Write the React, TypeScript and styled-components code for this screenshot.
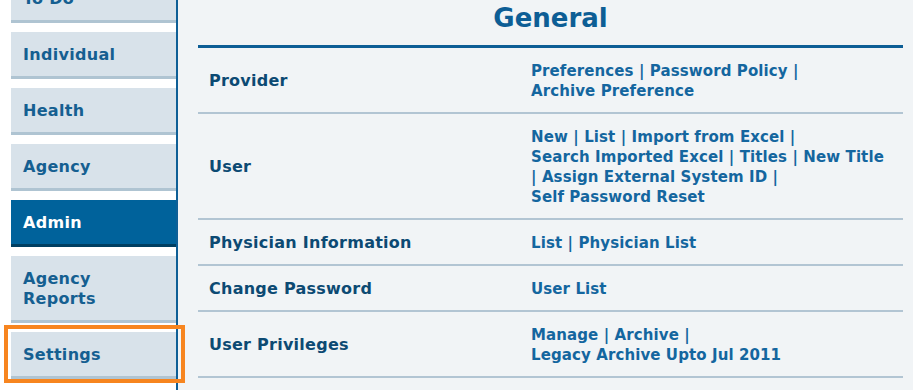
import React from "react";
import styled, { createGlobalStyle } from "styled-components";

const GlobalStyle = createGlobalStyle`
  html, body {
    margin: 0;
    padding: 0;
    background: #ffffff;
    font-family: "DejaVu Sans", Verdana, sans-serif;
    overflow: hidden;
  }
  * { box-sizing: border-box; }
`;

const Page = styled.div`
  display: flex;
  margin-top: -24px;
  min-height: calc(100vh + 24px);
`;

const Sidebar = styled.nav`
  width: 178px;
  flex: none;
  padding-left: 11px;
  border-right: 2px solid #0f5f96;
  background: #ffffff;
  display: flex;
  flex-direction: column;
  gap: 9px;
`;

const NavItem = styled.div<{ $active?: boolean }>`
  position: relative;
  padding: 13px 12px 11px;
  line-height: 20px;
  font-size: 16px;
  font-weight: bold;
  letter-spacing: 0.3px;
  background: ${(p) => (p.$active ? "#00629b" : "#d8e2ea")};
  color: ${(p) => (p.$active ? "#ffffff" : "#155f91")};
  border-bottom: 3px solid ${(p) => (p.$active ? "#003f62" : "#afc4d2")};
`;

const Highlight = styled.span`
  position: absolute;
  left: -7px;
  top: -7px;
  right: -9px;
  bottom: -7px;
  border: 4px solid #f7851f;
  pointer-events: none;
  z-index: 2;
`;

const Main = styled.main`
  flex: 1;
  background: #f1f4f6;
  padding: 0 10px 0 20px;
`;

const Heading = styled.h1`
  margin: 0;
  padding: 26px 0 11px;
  line-height: 32px;
  font-size: 26px;
  font-weight: bold;
  text-align: center;
  color: #0d5e95;
  border-bottom: 3px solid #0d5e95;
`;

const Row = styled.div`
  display: grid;
  grid-template-columns: 322px 1fr;
  align-items: center;
  border-bottom: 2px solid #b2c5d3;
`;

const Label = styled.div`
  padding: 13px 11px 11px;
  font-size: 16px;
  line-height: 20px;
  font-weight: bold;
  letter-spacing: 0.25px;
  color: #0c4a73;
`;

const Links = styled.div`
  padding: 13px 16px 11px 11px;
  font-size: 15px;
  line-height: 20px;
  font-weight: bold;
  letter-spacing: 0.1px;
  color: #14669f;
`;

const LinkItem = styled.a`
  color: inherit;
  text-decoration: none;
  white-space: nowrap;
  cursor: pointer;
`;

const navItems = [
  "To Do",
  "Individual",
  "Health",
  "Agency",
  "Admin",
  "Agency Reports",
  "Settings",
];

const rows: { label: string; links: string[] }[] = [
  { label: "Provider", links: ["Preferences", "Password Policy", "Archive Preference"] },
  {
    label: "User",
    links: [
      "New",
      "List",
      "Import from Excel",
      "Search Imported Excel",
      "Titles",
      "New Title",
      "Assign External System ID",
      "Self Password Reset",
    ],
  },
  { label: "Physician Information", links: ["List", "Physician List"] },
  { label: "Change Password", links: ["User List"] },
  { label: "User Privileges", links: ["Manage", "Archive", "Legacy Archive Upto Jul 2011"] },
];

export default function App() {
  return (
    <>
      <GlobalStyle />
      <Page>
        <Sidebar>
          {navItems.map((item) => (
            <NavItem key={item} $active={item === "Admin"}>
              {item === "Agency Reports" ? (
                <>
                  Agency
                  <br />
                  Reports
                </>
              ) : (
                item
              )}
              {item === "Settings" && <Highlight />}
            </NavItem>
          ))}
        </Sidebar>
        <Main>
          <Heading>General</Heading>
          {rows.map((row) => (
            <Row key={row.label}>
              <Label>{row.label}</Label>
              <Links>
                {row.links.map((l, i) => (
                  <React.Fragment key={l + i}>
                    {i > 0 && " | "}
                    <LinkItem>{l}</LinkItem>
                  </React.Fragment>
                ))}
              </Links>
            </Row>
          ))}
        </Main>
      </Page>
    </>
  );
}
